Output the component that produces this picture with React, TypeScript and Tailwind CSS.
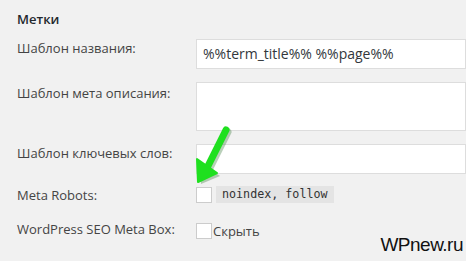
import React from 'react';

function Row({ label, children, className }: { label: string; children: React.ReactNode; className?: string }) {
  return (
    <div className={`flex items-start ${className || ''}`}>
      <div className="w-[179px] shrink-0 leading-5 text-[13px] pt-[1px]">{label}</div>
      <div className="flex-1">{children}</div>
    </div>
  );
}

function GreenArrow() {
  return (
    <svg className="absolute left-[188px] top-[124px]" width="50" height="66" viewBox="0 0 50 66">
      <g opacity="0.35" transform="translate(2 2)">
        <path d="M38 6 L20 42" stroke="#3a7a3a" strokeWidth="7" strokeLinecap="round" />
        <path d="M10 36 L11 58 L30 50 Z" fill="#3a7a3a" />
      </g>
      <path d="M38 6 L20 42" stroke="#1fe01f" strokeWidth="7" strokeLinecap="round" />
      <path d="M9 35 L10 58 L29 49 Z" fill="#1fe01f" stroke="#1fe01f" strokeWidth="2" strokeLinejoin="round" />
    </svg>
  );
}

export default function App() {
  return (
    <div className="relative w-[466px] h-[261px] overflow-hidden bg-[#f1f1f1] text-[#444] text-[14px] font-['Open_Sans',sans-serif]">
      <div className="pl-[17px] pt-[9px]">
        <div className="font-semibold text-[13px] text-[#23282d] leading-5">Метки</div>

        <Row label="Шаблон названия:" className="mt-[8px]">
          <div className="mt-[2px] h-[30px] bg-white border border-[#ddd] pl-[6px] leading-[28px] text-[#32373c]">
            %%term_title%% %%page%%
          </div>
        </Row>

        <Row label="Шаблон мета описания:" className="mt-[13px]">
          <div className="h-[49px] bg-white border border-[#ddd]"></div>
        </Row>

        <Row label="Шаблон ключевых слов:" className="mt-[11px]">
          <div className="mt-[2px] h-[30px] bg-white border border-[#ddd]"></div>
        </Row>

        <Row label="Meta Robots:" className="mt-[10px]">
          <div className="flex items-center mt-[2px] gap-[4px]">
            <div className="w-[16px] h-[16px] bg-white border border-[#ccc]"></div>
            <code className="bg-[#e4e4e4] px-[6px] h-[17px] leading-[17px] text-[11.7px] text-[#333] font-['DejaVu_Sans_Mono',monospace]">
              noindex, follow
            </code>
          </div>
        </Row>

        <Row label="WordPress SEO Meta Box:" className="mt-[13px]">
          <div className="flex items-center mt-[3px]">
            <div className="w-[16px] h-[16px] bg-white border border-[#ccc]"></div>
            <span className="ml-[1px] leading-5 text-[13px]">Скрыть</span>
          </div>
        </Row>
      </div>

      <GreenArrow />

      <div className="absolute right-[3px] bottom-[2px] text-[19px] text-[#111] font-['Liberation_Sans',Arial,sans-serif] tracking-[-0.5px]">
        WPnew.ru
      </div>
    </div>
  );
}
